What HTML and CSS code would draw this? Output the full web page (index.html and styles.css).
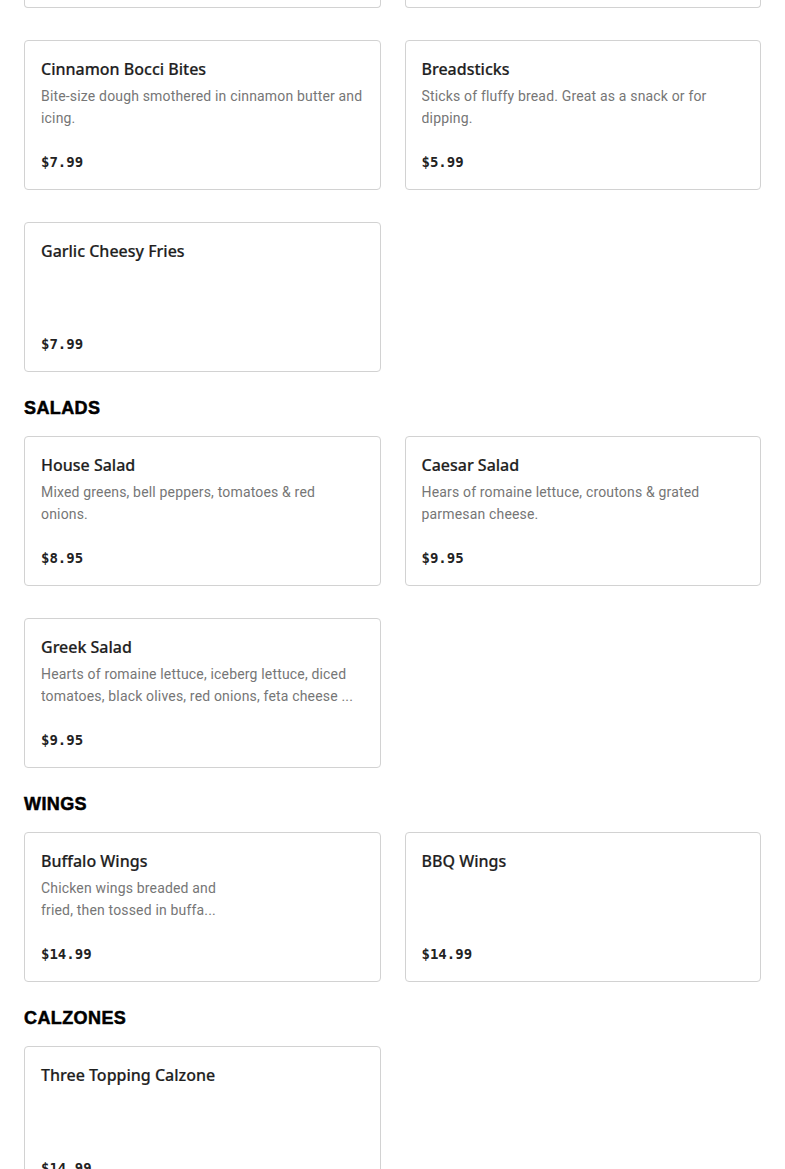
FILE: index.html
```html
<!DOCTYPE html>
<html lang="en">
<head>
<meta charset="utf-8">
<title>Menu</title>
<link rel="stylesheet" href="styles.css">
</head>
<body>
<main class="menu">
  <section class="section">
    <div class="grid">
      <div class="card card--cut"></div>
      <div class="card card--cut"></div>
      <article class="card">
        <h3 class="card__title">Cinnamon Bocci Bites</h3>
        <p class="card__desc">Bite-size dough smothered in cinnamon butter and icing.</p>
        <p class="card__price">$7.99</p>
      </article>
      <article class="card">
        <h3 class="card__title">Breadsticks</h3>
        <p class="card__desc">Sticks of fluffy bread. Great as a snack or for dipping.</p>
        <p class="card__price">$5.99</p>
      </article>
      <article class="card">
        <h3 class="card__title">Garlic Cheesy Fries</h3>
        <p class="card__price">$7.99</p>
      </article>
    </div>
  </section>

  <section class="section">
    <h2 class="section__title">SALADS</h2>
    <div class="grid">
      <article class="card">
        <h3 class="card__title">House Salad</h3>
        <p class="card__desc">Mixed greens, bell peppers, tomatoes &amp; red onions.</p>
        <p class="card__price">$8.95</p>
      </article>
      <article class="card">
        <h3 class="card__title">Caesar Salad</h3>
        <p class="card__desc">Hears of romaine lettuce, croutons &amp; grated parmesan cheese.</p>
        <p class="card__price">$9.95</p>
      </article>
      <article class="card">
        <h3 class="card__title">Greek Salad</h3>
        <p class="card__desc">Hearts of romaine lettuce, iceberg lettuce, diced tomatoes, black olives, red onions, feta cheese ...</p>
        <p class="card__price">$9.95</p>
      </article>
    </div>
  </section>

  <section class="section">
    <h2 class="section__title">WINGS</h2>
    <div class="grid">
      <article class="card">
        <h3 class="card__title">Buffalo Wings</h3>
        <p class="card__desc card__desc--narrow">Chicken wings breaded and fried, then tossed in buffa...</p>
        <p class="card__price">$14.99</p>
      </article>
      <article class="card">
        <h3 class="card__title">BBQ Wings</h3>
        <p class="card__price">$14.99</p>
      </article>
    </div>
  </section>

  <section class="section">
    <h2 class="section__title">CALZONES</h2>
    <div class="grid">
      <article class="card">
        <h3 class="card__title">Three Topping Calzone</h3>
        <p class="card__price">$14.99</p>
      </article>
    </div>
  </section>
</main>
</body>
</html>
```
FILE: styles.css
```css
* { box-sizing: border-box; }

html, body {
  margin: 0;
  padding: 0;
  background: #ffffff;
}

body {
  font-family: "Noto Sans", "Liberation Sans", sans-serif;
  color: #222222;
}

.menu {
  padding: 0 24px 40px;
  overflow: hidden;
}

.section__title {
  margin: 24px 0 16px;
  font-family: "Liberation Sans", Arial, sans-serif;
  font-weight: 700;
  font-size: 18px;
  line-height: 24px;
  letter-spacing: 0.4px;
  color: #000000;
  -webkit-text-stroke: 0.5px #000000;
}

.grid {
  display: grid;
  grid-template-columns: 1fr 1fr;
  column-gap: 24px;
  row-gap: 32px;
}

.card {
  display: flex;
  flex-direction: column;
  height: 150px;
  padding: 16px 16px 17px;
  border: 1px solid #d2d2d2;
  border-radius: 4px;
  background: #ffffff;
}

.card--cut {
  height: 8px;
  padding: 0;
  border-top: none;
  border-radius: 0 0 4px 4px;
}

.card__title {
  margin: 0;
  font-family: "Noto Sans", sans-serif;
  font-weight: 500;
  font-size: 16px;
  line-height: 24px;
  color: #1f1f1f;
  -webkit-text-stroke: 0.2px #1f1f1f;
}

.card__desc {
  margin: 4px 0 0;
  font-family: Roboto, "Noto Sans", sans-serif;
  font-size: 14px;
  line-height: 22px;
  letter-spacing: 0.17px;
  color: #767676;
  display: -webkit-box;
  -webkit-box-orient: vertical;
  -webkit-line-clamp: 2;
  overflow: hidden;
}

.card__desc--narrow {
  max-width: 185px;
}

.card__price {
  margin: auto 0 0;
  font-family: "DejaVu Sans Mono", "Liberation Mono", monospace;
  font-weight: 700;
  font-size: 14px;
  line-height: 20px;
  color: #222222;
}
```
